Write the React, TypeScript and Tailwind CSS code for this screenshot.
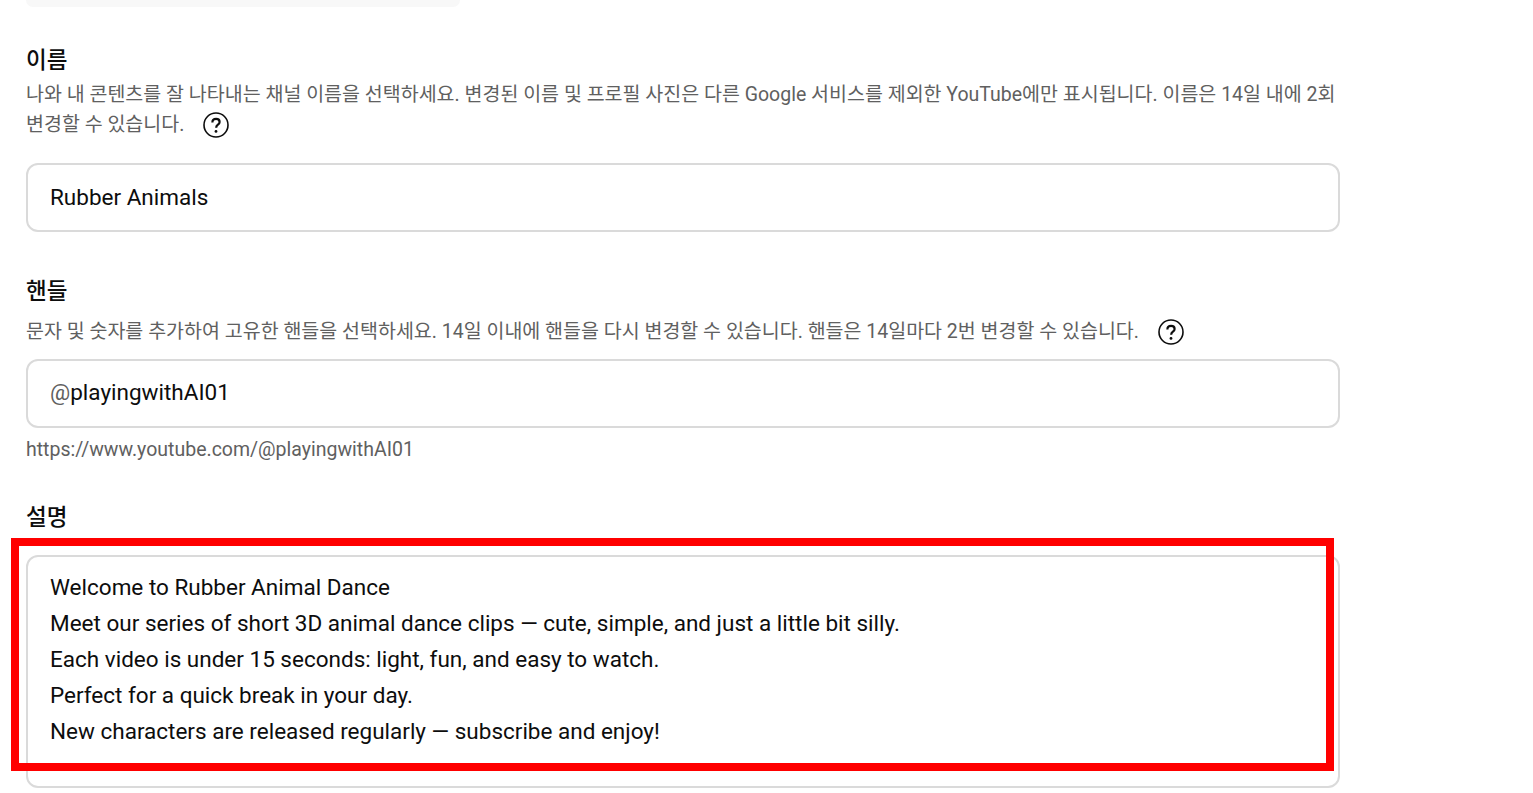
import type { ReactNode } from 'react'

const font = { fontFamily: 'Roboto, "Noto Sans CJK KR", sans-serif' }

const HelpIcon = () => (
  <svg width="26" height="26" viewBox="0 0 26 26" fill="none" className="shrink-0">
    <circle cx="13" cy="13" r="12" stroke="#0d0d0d" strokeWidth="1.6" />
    <path d="M9.4 10.4c0-2.2 1.6-3.5 3.7-3.5 2.1 0 3.5 1.3 3.5 3 0 1.2-.6 2-1.7 2.8-1.1.8-1.7 1.4-1.7 2.7v.4" stroke="#0d0d0d" strokeWidth="2.2" />
    <circle cx="13" cy="19.4" r="1.4" fill="#0d0d0d" />
  </svg>
)

const Label = ({ children }: { children: string }) => (
  <h2 className="text-[22.5px] leading-[30px] font-medium text-[#0d0d0d]">{children}</h2>
)

const Field = ({ children }: { children: ReactNode }) => (
  <div className="h-[69px] flex items-center px-[22px] border-2 border-[#dadada] rounded-xl text-[22.5px] text-[#0d0d0d]">
    <span>{children}</span>
  </div>
)

const descLines = [
  'Welcome to Rubber Animal Dance',
  'Meet our series of short 3D animal dance clips — cute, simple, and just a little bit silly.',
  'Each video is under 15 seconds: light, fun, and easy to watch.',
  'Perfect for a quick break in your day.',
  'New characters are released regularly — subscribe and enjoy!',
]

export default function App() {
  return (
    <div className="h-[793px] overflow-hidden bg-white pl-[26px]" style={font}>
      <div className="w-[434px] h-[7px] bg-[#f8f8f8] rounded-b-xl" />

      <div className="w-[1314px]">
        <section className="mt-[38px]">
          <Label>이름</Label>
          <div className="mt-[5px] text-[19.5px] leading-[30px] text-[#606060]">
            나와 내 콘텐츠를 잘 나타내는 채널 이름을 선택하세요. 변경된 이름 및 프로필 사진은 다른 Google 서비스를 제외한 YouTube에만 표시됩니다. 이름은 14일 내에 2회
            <div className="flex items-center gap-[19px]">
              <span>변경할 수 있습니다.</span>
              <HelpIcon />
            </div>
          </div>
          <div className="mt-[23px]">
            <Field>Rubber Animals</Field>
          </div>
        </section>

        <section className="mt-[44px]">
          <Label>핸들</Label>
          <div className="mt-[11px] flex items-center gap-[19px] text-[19.5px] leading-[30px] text-[#606060]">
            <span>문자 및 숫자를 추가하여 고유한 핸들을 선택하세요. 14일 이내에 핸들을 다시 변경할 수 있습니다. 핸들은 14일마다 2번 변경할 수 있습니다.</span>
            <HelpIcon />
          </div>
          <div className="mt-[12px]">
            <Field><span className="relative top-[-1px]"><span className="text-[#606060]">@</span>playingwithAI01</span></Field>
          </div>
          <p className="mt-[7px] text-[19.5px] leading-[30px] text-[#606060]">https://www.youtube.com/@playingwithAI01</p>
        </section>

        <section className="mt-[37px]">
          <Label>설명</Label>
          <div className="relative mt-[23px]">
            <div className="h-[233px] px-[22px] pt-[12px] border-2 border-[#dadada] rounded-xl text-[22.5px] leading-[36px] text-[#0d0d0d]">
              {descLines.map((line) => (
                <div key={line}>{line}</div>
              ))}
            </div>
            {/* red highlight drawn over the description box */}
            <div className="absolute left-[-15px] top-[-17px] w-[1323px] h-[233px] border-8 border-[#ff0000]" />
          </div>
        </section>
      </div>
    </div>
  )
}
